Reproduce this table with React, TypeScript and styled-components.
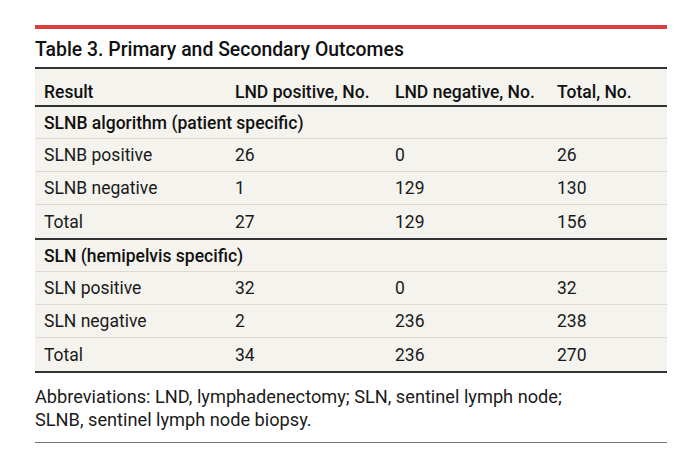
import React from 'react';
import styled, { createGlobalStyle } from 'styled-components';

const GlobalStyle = createGlobalStyle`
  html, body {
    margin: 0;
    padding: 0;
    background: #fff;
  }
  body {
    font-family: Roboto, "Liberation Sans", Arial, sans-serif;
    color: #1a1a1a;
  }
`;

const Figure = styled.section`
  width: 632px;
  margin-left: 35px;
  padding-top: 25px;
`;

const Title = styled.h2`
  margin: 0;
  border-top: 4px solid #d9403f;
  padding: 7px 0 0;
  height: 31px;
  font-size: 19.4px;
  font-weight: 500;
  line-height: 28px;
  color: #111;
`;

const Table = styled.div`
  background: #f4f3ee;
  border-top: 2px solid #333;
  border-bottom: 2px solid #333;
`;

const Row = styled.div<{ $head?: boolean; $dark?: boolean }>`
  display: grid;
  grid-template-columns: 191px 160px 162px 1fr;
  align-items: ${p => (p.$head ? 'end' : 'center')};
  height: ${p => (p.$head ? '34px' : p.$dark ? '33px' : '32px')};
  padding-bottom: ${p => (p.$head ? '2px' : '0')};
  border-bottom: ${p => (p.$head || p.$dark ? '2px solid #333' : '1px solid #dddbd3')};
  font-weight: ${p => (p.$head ? 500 : 400)};
  color: ${p => (p.$head ? '#111' : '#1a1a1a')};

  &:last-child {
    border-bottom: none;
  }
`;

const Cell = styled.div`
  padding-left: 9px;
  font-size: 17.5px;
  line-height: 22px;
  white-space: nowrap;
`;

const Section = styled.div`
  height: 31px;
  display: flex;
  align-items: center;
  padding-left: 9px;
  font-size: 17.5px;
  font-weight: 500;
  color: #111;
  border-bottom: 1px solid #dddbd3;
`;

const Note = styled.p`
  margin: 0;
  padding: 12px 0 11px;
  font-size: 18.2px;
  line-height: 23px;
  color: #1a1a1a;
  border-bottom: 1px solid #777;
`;

type Group = { label: string; rows: [string, string, string, string][] };

const groups: Group[] = [
  {
    label: 'SLNB algorithm (patient specific)',
    rows: [
      ['SLNB positive', '26', '0', '26'],
      ['SLNB negative', '1', '129', '130'],
      ['Total', '27', '129', '156'],
    ],
  },
  {
    label: 'SLN (hemipelvis specific)',
    rows: [
      ['SLN positive', '32', '0', '32'],
      ['SLN negative', '2', '236', '238'],
      ['Total', '34', '236', '270'],
    ],
  },
];

export default function App() {
  return (
    <>
      <GlobalStyle />
      <Figure>
        <Title>Table 3. Primary and Secondary Outcomes</Title>
        <Table>
          <Row $head>
            <Cell>Result</Cell>
            <Cell>LND positive, No.</Cell>
            <Cell>LND negative, No.</Cell>
            <Cell>Total, No.</Cell>
          </Row>
          {groups.map(g => (
            <React.Fragment key={g.label}>
              <Section>{g.label}</Section>
              {g.rows.map((r, ri) => (
                <Row key={ri} $dark={ri === g.rows.length - 1}>
                  {r.map((c, ci) => (
                    <Cell key={ci}>{c}</Cell>
                  ))}
                </Row>
              ))}
            </React.Fragment>
          ))}
        </Table>
        <Note>
          Abbreviations: LND, lymphadenectomy; SLN, sentinel lymph node;
          <br />
          SLNB, sentinel lymph node biopsy.
        </Note>
      </Figure>
    </>
  );
}
